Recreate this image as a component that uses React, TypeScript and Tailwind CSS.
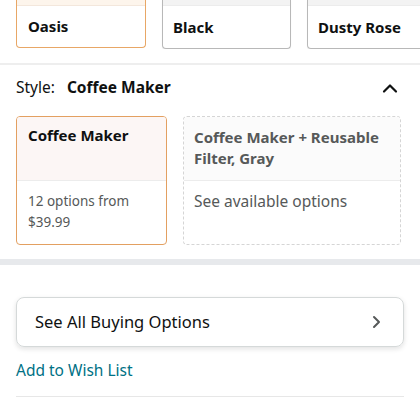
import React from 'react';

const font = { fontFamily: '"Noto Sans", "Open Sans", sans-serif' };

const App = () => {
  return (
    <div className="w-[420px] h-[420px] overflow-hidden bg-white" style={font}>
      {/* Color swatches (scrolled, top cut off) */}
      <div className="flex gap-[16px] pl-[16px] overflow-hidden">
        <div className="w-[130px] shrink-0 h-[48px] border border-t-0 border-[#e8a766] rounded-b-[4px] flex flex-col">
          <div className="h-[6px] bg-[#fdf5ec] border-b border-[#f3e7dc]" />
          <div className="flex-1 flex items-center px-[11px] text-[15px] font-bold text-[#0f1111]">Oasis</div>
        </div>
        <div className="w-[129px] shrink-0 h-[49px] border border-t-0 border-[#b8b8b8] rounded-b-[4px] flex flex-col shadow-[0_1px_1px_rgba(0,0,0,0.08)]">
          <div className="h-[6px] bg-[#f3f3f3] border-b border-[#ececec]" />
          <div className="flex-1 flex items-center px-[10px] text-[15px] font-bold text-[#0f1111]">Black</div>
        </div>
        <div className="w-[129px] shrink-0 h-[49px] border border-t-0 border-[#b8b8b8] rounded-b-[4px] flex flex-col shadow-[0_1px_1px_rgba(0,0,0,0.08)]">
          <div className="h-[6px] bg-[#f3f3f3] border-b border-[#ececec]" />
          <div className="flex-1 flex items-center px-[10px] text-[15px] font-bold text-[#0f1111] whitespace-nowrap">Dusty Rose</div>
        </div>
      </div>

      <div className="mt-[14px] h-[2px] bg-[#eeeeee]" />

      {/* Style header */}
      <div className="flex items-center justify-between pl-[16px] pr-[22px] h-[46px]">
        <div className="text-[15.5px] text-[#0f1111]">
          Style:<span className="ml-[12px] font-bold">Coffee Maker</span>
        </div>
        <svg width="16" height="12" viewBox="0 0 16 12" fill="none">
          <path d="M2 9.5 L8 3.5 L14 9.5" stroke="#0f1111" strokeWidth="2.2" strokeLinecap="round" strokeLinejoin="round" />
        </svg>
      </div>

      {/* Style options */}
      <div className="flex gap-[16px] pl-[16px] mt-[5px]">
        <div className="w-[151px] h-[129px] border border-[#e3a061] rounded-[4px] overflow-hidden flex flex-col">
          <div className="h-[64px] bg-[#fcf6f5] border-b border-[#ececec] px-[11px] pt-[8px] text-[15px] font-bold text-[#0f1111] leading-[21px]">
            Coffee Maker
          </div>
          <div className="px-[11px] pt-[10px] text-[13.5px] text-[#565959] leading-[21px]">
            12 options from
            <br />
            $39.99
          </div>
        </div>
        <div className="w-[218px] h-[129px] border border-dashed border-[#d5d5d5] rounded-[4px] overflow-hidden flex flex-col">
          <div className="h-[64px] bg-[#fbfbfb] border-b border-[#ececec] px-[10px] pt-[10px] text-[15px] font-bold text-[#565959] leading-[21px]">
            Coffee Maker + Reusable
            <br />
            Filter, Gray
          </div>
          <div className="px-[10px] pt-[10px] text-[15.5px] text-[#565959] leading-[21px]">See available options</div>
        </div>
      </div>

      <div className="mt-[14px] h-[6px] bg-[#e7e9ec]" />

      {/* Buying options */}
      <div className="px-[16px] pt-[32px]">
        <div className="h-[50px] border border-[#d5d9d9] rounded-[8px] shadow-[0_2px_5px_rgba(15,17,17,0.12)] flex items-center justify-between pl-[18px] pr-[22px]">
          <span className="text-[16.5px] text-[#0f1111]">See All Buying Options</span>
          <svg width="10" height="14" viewBox="0 0 10 14" fill="none">
            <path d="M3 2 L8 7 L3 12" stroke="#565959" strokeWidth="2" strokeLinecap="round" strokeLinejoin="round" />
          </svg>
        </div>
        <div className="mt-[12px] text-[15.5px] text-[#007185]">Add to Wish List</div>
        <div className="mt-[14px] h-[1px] bg-[#e7e7e7]" />
      </div>
    </div>
  );
};

export default App;
